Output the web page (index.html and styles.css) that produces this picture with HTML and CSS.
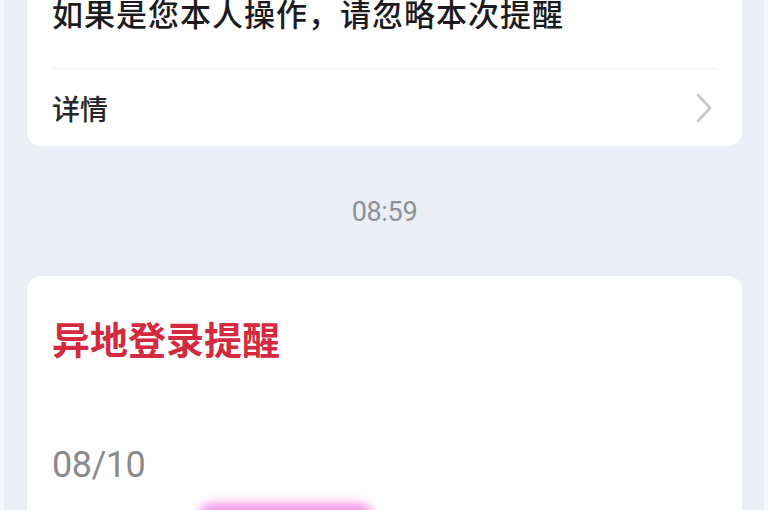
FILE: index.html
```html
<!DOCTYPE html>
<html lang="zh-CN">
<head>
<meta charset="utf-8">
<title>消息</title>
<link rel="stylesheet" href="styles.css">
</head>
<body>
<main class="feed">
  <section class="card card-first">
    <p class="msg">如果是您本人操作，请忽略本次提醒</p>
    <div class="divider"></div>
    <div class="detail-row">
      <span class="detail-label">详情</span>
      <svg class="chevron" width="20" height="30" viewBox="0 0 20 30"><polyline points="4,2 16,15 4,28" fill="none" stroke="#c6c7cc" stroke-width="2.6" stroke-linecap="round" stroke-linejoin="round"/></svg>
    </div>
  </section>
  <div class="time">08:59</div>
  <section class="card card-second">
    <h2 class="title">异地登录提醒</h2>
    <div class="date">08/10</div>
    <div class="blob-row"><div class="blob"></div></div>
  </section>
</main>
</body>
</html>
```
FILE: styles.css
```css
html, body {
  margin: 0;
  padding: 0;
  height: 100%;
  overflow: hidden;
}
body {
  background: #eceef5;
  font-family: "Noto Sans CJK SC", "Noto Sans", Roboto, sans-serif;
  border-left: 4px solid #f6f7fb;
  border-right: 4px solid #f6f7fb;
  box-sizing: border-box;
}
.feed {
  padding: 0 22px 0 23px;
}
.card {
  background: #ffffff;
  border-radius: 14px;
}
.card-first {
  margin-top: -41px;
  padding: 34px 24px 0 25px;
}
.msg {
  margin: 0;
  font-size: 31px;
  line-height: 40px;
  font-weight: 500;
  color: #1c1c1f;
  letter-spacing: 1px;
}
.divider {
  margin-top: 35px;
  height: 1px;
  background: #eeeef2;
}
.detail-row {
  height: 77px;
  display: flex;
  align-items: center;
  justify-content: space-between;
}
.detail-label {
  font-size: 28px;
  font-weight: 500;
  color: #26262a;
}
.chevron {
  margin-right: 4px;
}
.time {
  height: 130px;
  display: flex;
  align-items: center;
  justify-content: center;
  padding-top: 2px;
  box-sizing: border-box;
  font-family: Roboto, "Noto Sans", sans-serif;
  font-size: 27px;
  color: #8d9099;
  letter-spacing: -0.3px;
}
.card-second {
  padding: 40px 25px 40px 25px;
}
.title {
  margin: 0;
  font-size: 38px;
  line-height: 44px;
  font-weight: bold;
  color: #d32a40;
}
.date {
  margin-top: 85px;
  font-family: Roboto, "Noto Sans", sans-serif;
  font-size: 36px;
  line-height: 40px;
  color: #8a8a8e;
  letter-spacing: -0.5px;
}
.blob-row {
  padding: 18px 0 0 146px;
}
.blob {
  width: 176px;
  height: 30px;
  border-radius: 15px;
  background: #f49ae9;
  filter: blur(5px);
}
```
